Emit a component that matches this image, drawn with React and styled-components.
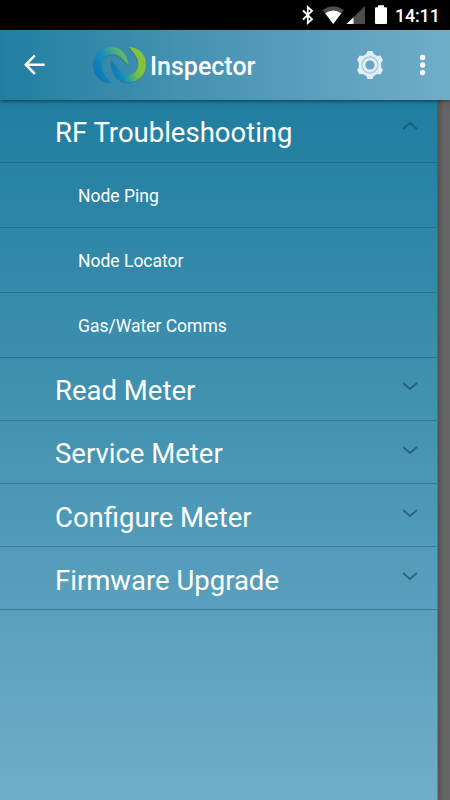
import React, { useState } from "react";
import styled, { createGlobalStyle } from "styled-components";

const GlobalStyle = createGlobalStyle`
  * {
    box-sizing: border-box;
  }
  body {
    margin: 0;
    background: #636363;
    font-family: Roboto, "Liberation Sans", sans-serif;
    color: white;
  }
`;

const Screen = styled.div`
  display: flex;
  flex-direction: column;
  width: 450px;
  height: 800px;
  overflow: hidden;
`;

const StatusBar = styled.div`
  display: flex;
  flex: none;
  height: 30px;
  background: black;
  padding-left: 296px;
`;

const StatusIcons = styled.svg`
  flex: none;
  width: 99px;
  height: 30px;
`;

const Clock = styled.span`
  font-size: 18px;
  font-weight: 500;
  line-height: 32px;
  letter-spacing: -0.2px;
`;

const AppBar = styled.header`
  display: flex;
  flex: none;
  align-items: center;
  position: relative;
  z-index: 1;
  height: 70px;
  padding-left: 20px;
  background: linear-gradient(to right, #207fa1, #4692b2 42%, #70adc9);
  box-shadow: 0 1px 4px rgba(0, 0, 0, 0.55);
`;

const IconButton = styled.button`
  display: flex;
  align-items: center;
  justify-content: center;
  flex: none;
  width: ${(props) => props.$width}px;
  height: 30px;
  padding: 0;
  border: none;
  background: none;
`;

const Logo = styled.svg`
  width: 56px;
  height: 40px;
  margin-left: 42px;
`;

const Title = styled.h1`
  flex: 1;
  margin: 0 0 0 2px;
  padding-top: 3px;
  font-size: 25px;
  font-weight: 500;
  line-height: 30px;
`;

const Content = styled.main`
  flex: 1;
  background: linear-gradient(to right, #535353 438px, #646464 444px);
`;

const Drawer = styled.nav`
  width: 438px;
  height: 700px;
  background: linear-gradient(#207ea0, #4694b3 49%, #70adca);
  border-right: 1px solid rgba(30, 80, 100, 0.35);
`;

const Group = styled.div`
  display: flex;
  justify-content: space-between;
  height: ${(props) => props.$height}px;
  padding: ${(props) => props.$top}px 18px 0 55px;
  border-bottom: 1px solid rgba(20, 70, 90, 0.36);
  font-size: 27.5px;
  line-height: 34px;
  cursor: pointer;
`;

const Item = styled.div`
  height: 65px;
  padding: 22px 0 0 78px;
  border-bottom: 1px solid rgba(20, 70, 90, 0.36);
  font-size: 17.5px;
  line-height: 22px;
`;

const Chevron = styled.svg`
  width: 18px;
  height: 12px;
  margin-top: ${(props) => props.$offset}px;
  transform: ${(props) => (props.$open ? "rotate(180deg)" : "none")};
`;

const groups = [
  {
    name: "RF Troubleshooting",
    height: 63,
    top: 16,
    chevron: 4,
    items: ["Node Ping", "Node Locator", "Gas/Water Comms"],
  },
  { name: "Read Meter", height: 63, top: 16, chevron: 6, items: [] },
  { name: "Service Meter", height: 63, top: 16, chevron: 7, items: [] },
  { name: "Configure Meter", height: 63, top: 17, chevron: 6, items: [] },
  { name: "Firmware Upgrade", height: 63, top: 17, chevron: 6, items: [] },
];

const SystemStatus = () => (
  <StatusIcons viewBox="296 0 99 30">
    <path
      d="M303 10.5 L312 19.2 L307.8 23 V7 L312 10.8 L303 19.5"
      fill="none"
      stroke="white"
      strokeWidth="1.8"
    />
    <path d="M322.4 10 Q333.2 2.6 344 10 L333.2 24Z" fill="#4d4d4d" />
    <path d="M325.2 13.2 Q333.2 7.8 341.2 13.2 L333.2 24Z" fill="white" />
    <path d="M346.6 24 L365 6 V24Z" fill="#4d4d4d" />
    <path d="M346.6 24 L353.5 17.2 V24Z" fill="white" />
    <path
      d="M378 5.3 H384 V7.3 H386 Q387 7.3 387 8.3 V23 Q387 24 386 24 H376 Q375 24 375 23 V8.3 Q375 7.3 376 7.3 H378Z"
      fill="white"
    />
  </StatusIcons>
);

const Swirl = () => (
  <Logo viewBox="36 45 168 120">
    <defs>
      <linearGradient id="leftArc" x1="0" y1="0.75" x2="1" y2="0.2">
        <stop offset="0" stopColor="#0872bd" />
        <stop offset="0.4" stopColor="#168dc1" />
        <stop offset="0.72" stopColor="#48aa87" />
        <stop offset="1" stopColor="#7cc142" />
      </linearGradient>
      <linearGradient id="rightArc" x1="0" y1="0.65" x2="1" y2="0.3">
        <stop offset="0" stopColor="#0872bd" />
        <stop offset="0.3" stopColor="#1995b9" />
        <stop offset="0.56" stopColor="#63b65b" />
        <stop offset="0.75" stopColor="#82c43c" />
      </linearGradient>
      <filter id="logoShadow" x="-20%" y="-20%" width="140%" height="140%">
        <feDropShadow
          dx="-1"
          dy="2"
          stdDeviation="2"
          floodColor="#104052"
          floodOpacity="0.4"
        />
      </filter>
    </defs>
    <g filter="url(#logoShadow)">
      <path
        d="M95 157 C65 159 41 135 41 105 C41 74 66 51 95 51 C119 51 140 66 146 106 C132 93 121 75 101 73 C80 72 65 87 65 107 C65 128 78 144 95 157Z"
        fill="url(#leftArc)"
      />
      <path
        d="M147 51 C177 52 198 74 198 103 C198 134 175 157 145 157 C118 157 96 136 93 91 C108 105 118 131 141 134 C161 136 175 121 175 102 C175 82 165 74 147 51Z"
        fill="url(#rightArc)"
      />
    </g>
  </Logo>
);

const BackArrow = () => (
  <svg width="22" height="22" viewBox="0 0 22 22">
    <path
      d="M20.6 10.7 H1.8 M10.8 1.5 L1.8 10.7 L10.8 19.9"
      fill="none"
      stroke="white"
      strokeWidth="2.5"
    />
  </svg>
);

const Gear = () => (
  <svg width="28" height="30" viewBox="-14 -15 28 30">
    <circle r="8.2" fill="#a9cddd" />
    <g fill="#e0edf4">
      <path
        fillRule="evenodd"
        d="M-2.6 -14 H2.6 L3.7 -11 L7.2 -9 L10.4 -9.6 L13 -5 L11.2 -2.2 V2.2 L13 5 L10.4 9.6 L7.2 9 L3.7 11 L2.6 14 H-2.6 L-3.7 11 L-7.2 9 L-10.4 9.6 L-13 5 L-11.2 2.2 V-2.2 L-13 -5 L-10.4 -9.6 L-7.2 -9 L-3.7 -11Z M0 -8.4 A8.4 8.4 0 1 0 0 8.4 A8.4 8.4 0 1 0 0 -8.4Z"
      />
      <circle r="7.4" />
    </g>
    <circle r="4.6" fill="#63a5c3" />
  </svg>
);

const MoreDots = () => (
  <svg width="8" height="24" viewBox="0 0 8 24">
    <circle cx="3.6" cy="4.4" r="2.7" fill="white" />
    <circle cx="3.6" cy="12" r="2.7" fill="white" />
    <circle cx="3.6" cy="19.6" r="2.7" fill="white" />
  </svg>
);

const MenuGroup = ({ group, open, onToggle }) => (
  <>
    <Group $height={group.height} $top={group.top} onClick={onToggle}>
      <span>{group.name}</span>
      <Chevron viewBox="0 0 18 12" $open={open} $offset={group.chevron}>
        <path
          d="M2 3 L9 9 L16 3"
          fill="none"
          stroke="#164e66"
          strokeOpacity="0.68"
          strokeWidth="1.9"
        />
      </Chevron>
    </Group>
    {open && group.items.map((item) => <Item key={item}>{item}</Item>)}
  </>
);

const App = () => {
  const [opened, setOpened] = useState("RF Troubleshooting");

  return (
    <Screen>
      <GlobalStyle />
      <StatusBar>
        <SystemStatus />
        <Clock>14:11</Clock>
      </StatusBar>
      <AppBar>
        <IconButton $width={30} aria-label="Back">
          <BackArrow />
        </IconButton>
        <Swirl />
        <Title>Inspector</Title>
        <IconButton $width={50} aria-label="Settings">
          <Gear />
        </IconButton>
        <IconButton $width={55} aria-label="More">
          <MoreDots />
        </IconButton>
      </AppBar>
      <Content>
        <Drawer>
          {groups.map((group) => (
            <MenuGroup
              key={group.name}
              group={group}
              open={opened === group.name}
              onToggle={() => setOpened(opened === group.name ? "" : group.name)}
            />
          ))}
        </Drawer>
      </Content>
    </Screen>
  );
};

export default App;
